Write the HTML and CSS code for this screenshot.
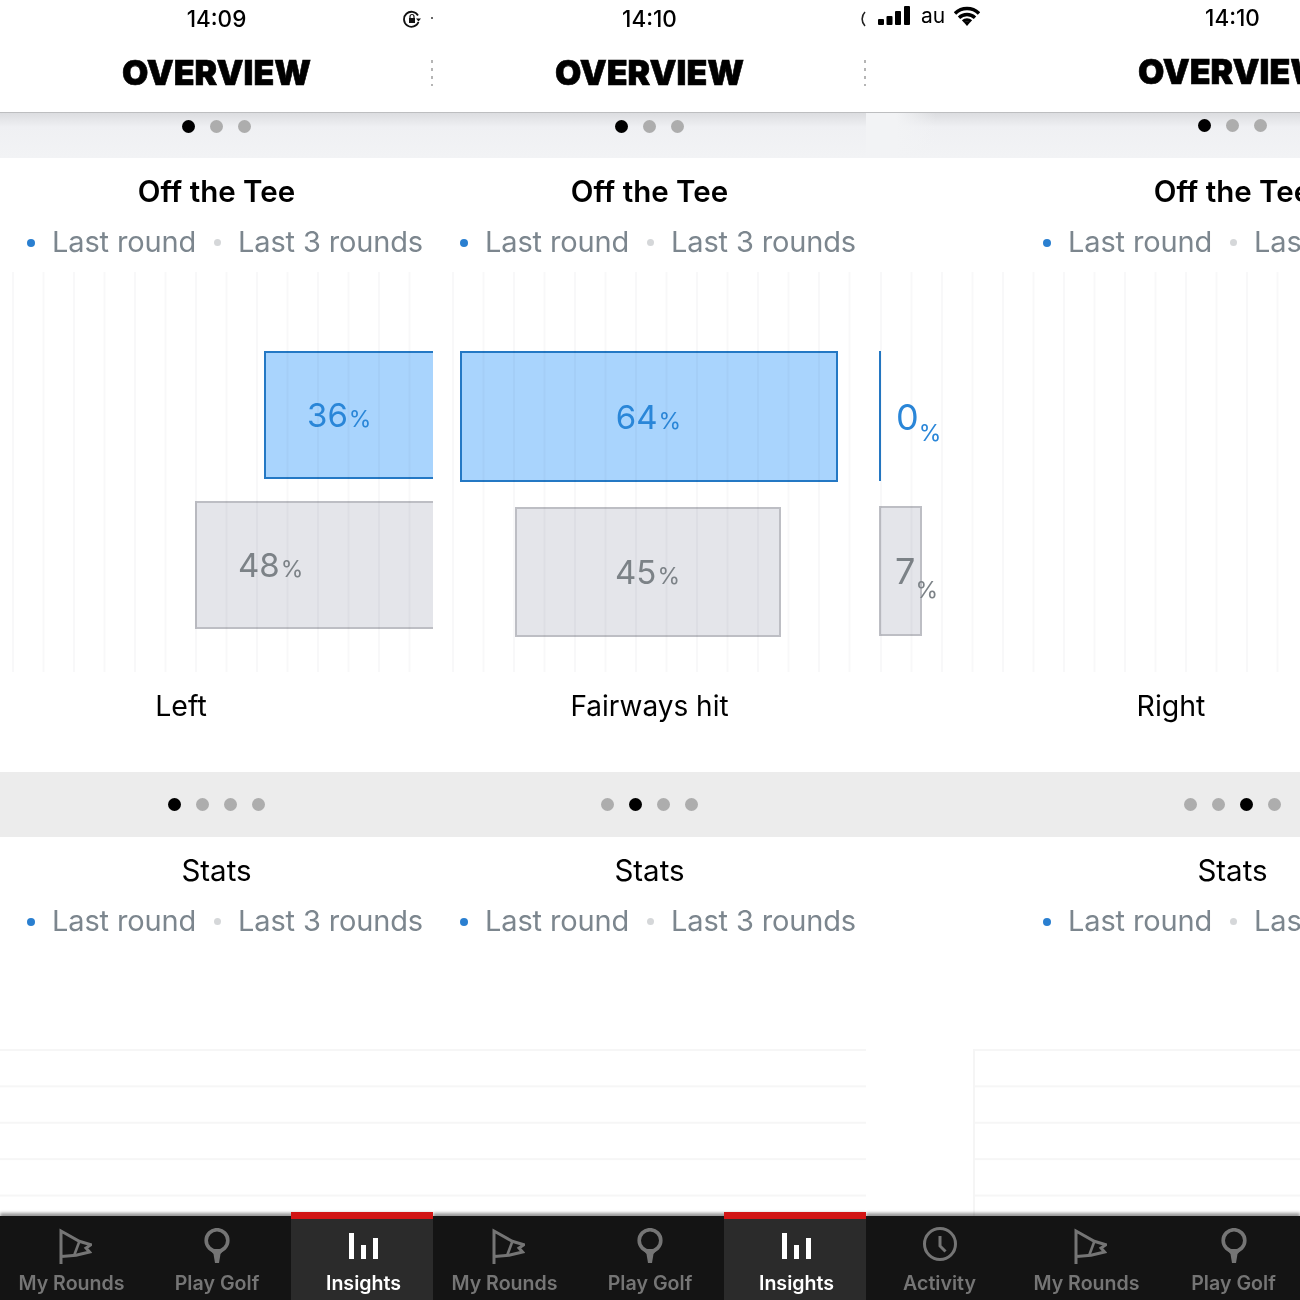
FILE: index.html
```html
<!DOCTYPE html>
<html lang="en">
<head>
    <meta charset="UTF-8"/>
    <title>Overview</title>
    <link rel="stylesheet" href="styles.css">
</head>
<body>
<svg class="icon-defs" width="0" height="0">
    <defs>
        <symbol id="icon-flag" viewBox="0 0 34 36">
            <path d="M3 36V3L21.3 13.3L33 16.7L28 20L31.5 24L18 27.3L3.5 28.5" fill="none" stroke="currentColor" stroke-width="3" stroke-linejoin="miter"/>
            <path d="M21.5 13L16.3 27" fill="none" stroke="currentColor" stroke-width="2.6"/>
        </symbol>
        <symbol id="icon-tee" viewBox="0 0 28 36">
            <circle cx="14" cy="12.5" r="10.8" fill="none" stroke="currentColor" stroke-width="3.6"/>
            <path d="M6 21L10.5 26L12 35H16L17.5 26L22 21Z" fill="currentColor"/>
        </symbol>
        <symbol id="icon-bars" viewBox="0 0 30 26">
            <rect x="0" y="0" width="5" height="26" fill="currentColor"/>
            <rect x="12" y="12" width="5" height="14" fill="currentColor"/>
            <rect x="24" y="5" width="5" height="21" fill="currentColor"/>
        </symbol>
        <symbol id="icon-clock" viewBox="0 0 36 36">
            <circle cx="18" cy="18" r="15.5" fill="none" stroke="currentColor" stroke-width="3"/>
            <path d="M18 10V20L23.5 25.5" fill="none" stroke="currentColor" stroke-width="3"/>
        </symbol>
    </defs>
</svg>

<main class="board">

    <!-- first screen, left bar -->
    <section class="screen">
        <div class="top-bar">
            <div class="status-row">
                <span class="clock">14:09</span>
                <svg class="lock-icon" viewBox="0 0 18 18" width="18" height="18">
                    <path d="M15 5.5A7.5 7.5 0 1 0 15.5 12" fill="none" stroke="#111" stroke-width="1.8"/>
                    <path d="M13 8.5L18 8.5L15.5 11.5Z" fill="#111"/>
                    <rect x="6" y="8" width="6" height="5" fill="#111"/>
                    <path d="M7 8V6.5A2 2 0 0 1 11 6.5V8" fill="none" stroke="#111" stroke-width="1.2"/>
                </svg>
                <span class="status-dot"></span>
            </div>
            <div class="header-row">
                <h1 class="page-title">OVERVIEW</h1>
                <span class="kebab"></span>
            </div>
        </div>
        <div class="pager pager-top">
            <span class="dot dot-on"></span><span class="dot"></span><span class="dot"></span>
        </div>
        <div class="heading-block">
            <h2 class="chart-title chart-title-bold">Off the Tee</h2>
            <div class="legend">
                <span class="legend-dot legend-dot-blue"></span><span class="legend-text">Last round</span>
                <span class="legend-dot legend-dot-grey"></span><span class="legend-text">Last 3 rounds</span>
            </div>
        </div>
        <div class="chart chart-left">
            <div class="bar bar-blue bar-tall-a" style="width: 169px"><span class="value">36<small>%</small></span></div>
            <div class="bar bar-grey bar-tall-a" style="width: 238px"><span class="value">48<small>%</small></span></div>
        </div>
        <div class="chart-label label-left">Left</div>
        <div class="pager pager-wide">
            <span class="dot dot-on"></span><span class="dot"></span><span class="dot"></span><span class="dot"></span>
        </div>
        <div class="heading-block heading-stats">
            <h2 class="chart-title">Stats</h2>
            <div class="legend">
                <span class="legend-dot legend-dot-blue"></span><span class="legend-text">Last round</span>
                <span class="legend-dot legend-dot-grey"></span><span class="legend-text">Last 3 rounds</span>
            </div>
        </div>
        <div class="stats-grid"></div>
        <nav class="tab-bar">
            <a class="tab"><svg class="tab-icon flag"><use href="#icon-flag"/></svg>My Rounds</a>
            <a class="tab"><svg class="tab-icon tee"><use href="#icon-tee"/></svg>Play Golf</a>
            <a class="tab tab-on"><svg class="tab-icon bars"><use href="#icon-bars"/></svg>Insights</a>
        </nav>
    </section>

    <!-- second screen, middle bar -->
    <section class="screen">
        <div class="top-bar">
            <div class="status-row">
                <span class="clock">14:10</span>
                <svg class="lock-cut" viewBox="0 0 6 18" width="6" height="18">
                    <path d="M5 2A10 10 0 0 0 5 16" fill="none" stroke="#222" stroke-width="1.6"/>
                </svg>
            </div>
            <div class="header-row">
                <h1 class="page-title">OVERVIEW</h1>
                <span class="kebab"></span>
            </div>
        </div>
        <div class="pager pager-top">
            <span class="dot dot-on"></span><span class="dot"></span><span class="dot"></span>
        </div>
        <div class="heading-block">
            <h2 class="chart-title chart-title-bold">Off the Tee</h2>
            <div class="legend">
                <span class="legend-dot legend-dot-blue"></span><span class="legend-text">Last round</span>
                <span class="legend-dot legend-dot-grey"></span><span class="legend-text">Last 3 rounds</span>
            </div>
        </div>
        <div class="chart chart-middle">
            <div class="bar bar-blue bar-tall-b" style="width: 378px"><span class="value">64<small>%</small></span></div>
            <div class="bar bar-grey bar-tall-b" style="width: 266px"><span class="value">45<small>%</small></span></div>
        </div>
        <div class="chart-label label-middle">Fairways hit</div>
        <div class="pager pager-wide">
            <span class="dot"></span><span class="dot dot-on"></span><span class="dot"></span><span class="dot"></span>
        </div>
        <div class="heading-block heading-stats">
            <h2 class="chart-title">Stats</h2>
            <div class="legend">
                <span class="legend-dot legend-dot-blue"></span><span class="legend-text">Last round</span>
                <span class="legend-dot legend-dot-grey"></span><span class="legend-text">Last 3 rounds</span>
            </div>
        </div>
        <div class="stats-grid"></div>
        <nav class="tab-bar">
            <a class="tab"><svg class="tab-icon flag"><use href="#icon-flag"/></svg>My Rounds</a>
            <a class="tab"><svg class="tab-icon tee"><use href="#icon-tee"/></svg>Play Golf</a>
            <a class="tab tab-on"><svg class="tab-icon bars"><use href="#icon-bars"/></svg>Insights</a>
        </nav>
    </section>

    <!-- third screen, cut off at the right edge -->
    <section class="screen screen-cut">
        <div class="top-bar">
            <div class="status-row">
                <div class="carrier">
                    <svg viewBox="0 0 32 20" width="32" height="20">
                        <rect x="0" y="13" width="6" height="6" rx="1" fill="#000"/>
                        <rect x="8.5" y="10" width="6" height="9" rx="1" fill="#000"/>
                        <rect x="17" y="5" width="6" height="14" rx="1" fill="#000"/>
                        <rect x="26" y="0" width="6" height="19" rx="1" fill="#000"/>
                    </svg>
                    <span class="carrier-name">au</span>
                    <svg viewBox="0 0 26 20" width="26" height="20">
                        <path d="M1 7.5A17 17 0 0 1 25 7.5M5 11.8A11.5 11.5 0 0 1 21 11.8M9 15.6A6 6 0 0 1 17 15.6" fill="none" stroke="#000" stroke-width="3.4"/>
                        <path d="M10 16.5L13 20L16 16.5A4 4 0 0 0 10 16.5Z" fill="#000"/>
                    </svg>
                </div>
                <span class="clock">14:10</span>
            </div>
            <div class="header-row">
                <h1 class="page-title">OVERVIEW</h1>
            </div>
        </div>
        <div class="pager pager-top">
            <span class="dot dot-on"></span><span class="dot"></span><span class="dot"></span>
        </div>
        <div class="heading-block">
            <h2 class="chart-title chart-title-bold">Off the Tee</h2>
            <div class="legend">
                <span class="legend-dot legend-dot-blue"></span><span class="legend-text">Last round</span>
                <span class="legend-dot legend-dot-grey"></span><span class="legend-text">Last 3 rounds</span>
            </div>
        </div>
        <div class="chart chart-right">
            <div class="bar bar-blue bar-tall-b bar-thin" style="width: 2px"><span class="value">0<small>%</small></span></div>
            <div class="bar bar-grey bar-tall-b bar-thin" style="width: 43px"><span class="value">7<small>%</small></span></div>
        </div>
        <div class="chart-label label-right">Right</div>
        <div class="pager pager-wide">
            <span class="dot"></span><span class="dot"></span><span class="dot dot-on"></span><span class="dot"></span>
        </div>
        <div class="heading-block heading-stats">
            <h2 class="chart-title">Stats</h2>
            <div class="legend">
                <span class="legend-dot legend-dot-blue"></span><span class="legend-text">Last round</span>
                <span class="legend-dot legend-dot-grey"></span><span class="legend-text">Last 3 rounds</span>
            </div>
        </div>
        <div class="stats-grid"></div>
        <nav class="tab-bar">
            <a class="tab"><svg class="tab-icon clock-icon"><use href="#icon-clock"/></svg>Activity</a>
            <a class="tab"><svg class="tab-icon flag"><use href="#icon-flag"/></svg>My Rounds</a>
            <a class="tab"><svg class="tab-icon tee"><use href="#icon-tee"/></svg>Play Golf</a>
        </nav>
    </section>

</main>
</body>
</html>
```

FILE: styles.css
```css
body {
    margin: 0;
    background: #ffffff;
    color: #000000;
    font-family: "Inter", "Liberation Sans", sans-serif;
    overflow: hidden;
}

.icon-defs {
    display: block;
    height: 0;
}

.board {
    display: flex;
    width: 1300px;
    height: 1300px;
}

.screen {
    display: flex;
    flex-direction: column;
    flex: none;
    width: 433px;
    height: 1300px;
    overflow: hidden;
}

.screen-cut {
    width: 434px;
}

/* top bar */
.top-bar {
    flex: none;
    height: 112px;
    background: #ffffff;
    border-bottom: 1px solid #bdbec0;
}

.status-row {
    display: flex;
    align-items: center;
    height: 36px;
    width: 433px;
}

.clock {
    flex: none;
    width: 433px;
    text-align: center;
    font-size: 22.5px;
    font-weight: 500;
}

.lock-icon {
    flex: none;
    margin-left: -30px;
    margin-top: 1px;
}

.status-dot {
    flex: none;
    width: 2px;
    height: 2px;
    margin-left: 10px;
    border-radius: 50%;
    background: #333333;
}

.lock-cut {
    flex: none;
    margin-left: -6px;
    margin-top: 2px;
}

.carrier {
    display: flex;
    flex: none;
    align-items: center;
    width: 150px;
    padding-left: 12px;
    box-sizing: border-box;
    margin-top: -3px;
}

.carrier-name {
    margin: 0 9px 0 11px;
    font-size: 21px;
}

.screen-cut .status-row {
    width: 583px;
    margin-top: -1px;
}

.header-row {
    position: relative;
    display: flex;
    align-items: center;
    justify-content: center;
    width: 433px;
    height: 72px;
}

.page-title {
    margin: 0;
    font-size: 34px;
    font-weight: 900;
    -webkit-text-stroke: 0.6px #000000;
    white-space: nowrap;
}

/* the menu dots sit on the seam of the screen */
.kebab {
    position: absolute;
    top: 24px;
    right: 0;
    width: 2px;
    height: 26px;
    background: repeating-linear-gradient(180deg, #b5b5b5 0 3px, transparent 3px 8px);
}

/* pager strips */
.pager {
    display: flex;
    flex: none;
    align-items: center;
    justify-content: center;
    gap: 15px;
    width: 433px;
}

.pager-top {
    height: 45px;
    padding-bottom: 19px;
    box-sizing: border-box;
    background: linear-gradient(180deg, #dcdde0 0, #eff0f3 14px, #f2f3f5 100%);
}

.pager-wide {
    height: 65px;
    background: #ececec;
}

.dot {
    width: 13px;
    height: 13px;
    border-radius: 50%;
    background: #adadad;
}

.dot-on {
    background: #000000;
}

/* headings */
.heading-block {
    flex: none;
    display: flex;
    flex-direction: column;
    align-items: center;
    width: 433px;
    height: 114px;
}

.chart-title {
    margin: 0;
    height: 66px;
    line-height: 66px;
    font-size: 29.5px;
    font-weight: 400;
    white-space: nowrap;
}

.chart-title-bold {
    font-weight: 600;
}

.legend {
    display: flex;
    align-items: center;
    align-self: flex-start;
    height: 36px;
    padding-left: 27px;
    margin-top: -1px;
}

.legend-dot {
    flex: none;
    width: 8px;
    height: 8px;
    border-radius: 50%;
    margin-top: 3px;
}

.legend-dot-blue {
    background: #2a7fd0;
    margin-right: 17px;
}

.legend-dot-grey {
    width: 7px;
    height: 7px;
    background: #d5d7d9;
    margin: 3px 17px 0 18px;
}

.legend-text {
    font-size: 29px;
    letter-spacing: -0.15px;
    color: #7c868e;
    white-space: nowrap;
}

.heading-stats {
    height: 212px;
}

/* bar charts */
.chart {
    display: flex;
    flex: none;
    flex-direction: column;
    width: 433px;
    height: 400px;
    padding-top: 79px;
    box-sizing: border-box;
    background-image: linear-gradient(90deg, #f8f8f9 0 2px, transparent 2px);
    background-size: 30.5px 100%;
    background-repeat: repeat-x;
}

.chart-left {
    align-items: flex-end;
    gap: 22px;
    background-position: 12px 0;
}

.chart-middle {
    align-items: center;
    gap: 25px;
    padding-right: 2px;
    background-position: 19px 0;
}

.chart-right {
    align-items: flex-start;
    gap: 25px;
    padding-left: 13px;
    background-position: 14px 0;
}

.bar {
    display: flex;
    flex: none;
    align-items: center;
    justify-content: center;
    box-sizing: border-box;
    border: 2px solid;
    mix-blend-mode: multiply;
    white-space: nowrap;
}

.bar-tall-a {
    height: 128px;
}

.bar-tall-b {
    height: 130px;
}

.chart-left .bar {
    justify-content: flex-start;
    padding-left: 41px;
    border-right: none;
}

.chart-middle .bar-blue {
    height: 131px;
}

.chart-middle .bar-grey {
    margin-right: 2px;
}

.bar-blue {
    background: #a9d4fd;
    border-color: #2478c4;
    color: #2a86d8;
}

.bar-grey {
    background: #e4e5ea;
    border-color: #bdbec4;
    color: #7c8287;
}

.value {
    font-size: 33px;
    line-height: 1;
    padding-top: 1px;
}

.value small {
    margin-left: 1px;
    font-size: 23px;
}

.bar-thin {
    justify-content: flex-start;
}

.bar-thin .value {
    font-size: 36px;
    padding-top: 12px;
}

.bar-thin small {
    margin-left: 0;
    vertical-align: -14px;
}

.bar-thin.bar-blue {
    border-width: 0 0 0 2px;
}

.bar-thin.bar-blue .value {
    margin-left: 15px;
}

.bar-thin.bar-blue small {
    vertical-align: -11px;
}

.bar-thin.bar-grey .value {
    margin-left: 14px;
}

.chart-label {
    flex: none;
    width: 433px;
    height: 100px;
    padding-top: 14px;
    box-sizing: border-box;
    text-align: center;
    font-size: 28.5px;
    line-height: 40px;
}

.label-left {
    padding-right: 71px;
}

.label-middle {
    font-size: 28px;
}

.label-right {
    padding-left: 177px;
}

/* third screen starts 150px further right than the strip it sits in */
.screen-cut .top-bar {
    width: 434px;
}

.screen-cut .header-row,
.screen-cut .heading-block {
    margin-left: 150px;
}

.screen-cut .pager {
    width: 434px;
    padding-left: 299px;
    box-sizing: border-box;
}

.screen-cut .pager-top {
    padding-bottom: 20px;
    background: linear-gradient(90deg, #f2f3f5 30px, rgba(242, 243, 245, 0) 70px),
        linear-gradient(180deg, #dcdde0 0, #eff0f3 14px, #f2f3f5 100%);
}

.screen-cut .pager .dot {
    flex: none;
}

/* empty stats plot */
.stats-grid {
    flex: 1;
    background-image: linear-gradient(180deg, #f6f6f6 0 2px, transparent 2px);
    background-size: 100% 36.4px;
}

.screen-cut .stats-grid {
    margin-left: 107px;
    border-left: 2px solid #f5f5f5;
}

/* tab bar */
.tab-bar {
    position: relative;
    display: grid;
    flex: none;
    grid-template-columns: 143px 148px 142px;
    height: 84px;
    background: #141414;
    box-shadow: 0 -3px 3px rgba(0, 0, 0, 0.4);
}

.screen-cut .tab-bar {
    grid-template-columns: 147px 147px 147px;
}

.tab {
    display: flex;
    flex-direction: column;
    align-items: center;
    height: 84px;
    box-sizing: border-box;
    color: #757575;
    font-size: 19.6px;
    font-weight: 600;
    line-height: 24px;
    white-space: nowrap;
}

.tab-icon {
    flex: none;
    height: 36px;
    margin-top: 12px;
    margin-bottom: 7px;
}

.tab-icon.flag {
    width: 34px;
    margin-left: 6px;
}

.tab-icon.tee {
    width: 28px;
}

.tab-icon.clock-icon {
    width: 36px;
    margin-top: 10px;
    margin-bottom: 9px;
}

.tab-icon.bars {
    width: 30px;
    height: 26px;
    margin-top: 17px;
    margin-bottom: 12px;
}

.tab-on {
    position: relative;
    padding-left: 3px;
    background: #2b2b2b;
    color: #ffffff;
}

/* red marker sticks out above the bar */
.tab-on::before {
    content: "";
    position: absolute;
    top: -4px;
    left: 0;
    right: 0;
    height: 7px;
    background: #d21414;
}
```
